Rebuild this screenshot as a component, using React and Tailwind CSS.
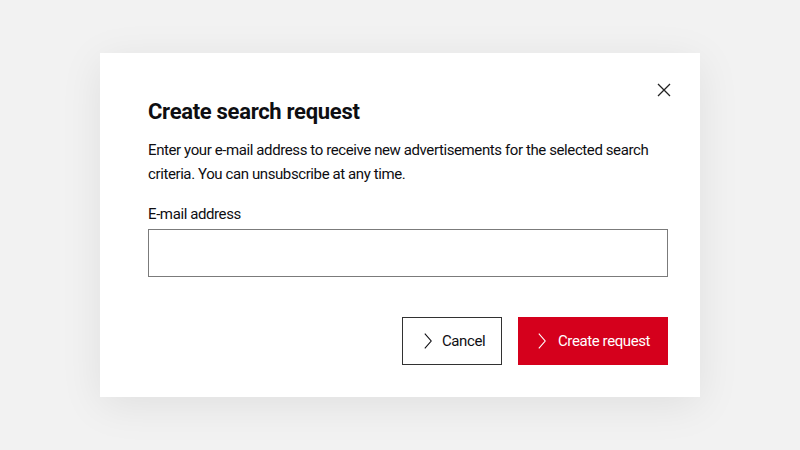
import React from "react";

const Chevron = ({ className }) => (
  <svg className={className} viewBox="0 0 8 16" fill="none" stroke="currentColor" strokeWidth={1.1}>
    <path d="M0.8 0.6l6.4 7.4-6.4 7.4" />
  </svg>
);

const App = () => {
  return (
    <div
      className="w-[800px] h-[450px] bg-[#f2f2f2] flex items-start justify-center pt-[53px]"
      style={{ fontFamily: 'Roboto, "Liberation Sans", sans-serif' }}
    >
      <div className="relative w-[600px] bg-white pl-12 pr-8 pt-[43px] pb-8 shadow-[0_8px_40px_rgba(0,0,0,0.08)]">
        {/* Close */}
        <button className="absolute right-[29px] top-[30px] w-[14px] h-[14px] text-[#222]">
          <svg viewBox="0 0 14 14" className="w-full h-full" fill="none" stroke="currentColor" strokeWidth={1.3}>
            <path d="M1 1l12 12M13 1L1 13" />
          </svg>
        </button>

        <h2 className="text-[22px] leading-[32px] font-bold text-[#0e0e12] tracking-[-0.3px]">
          Create search request
        </h2>
        <p className="mt-[10px] text-[15px] leading-[24px] text-[#0e0e12] tracking-[-0.4px]">
          Enter your e-mail address to receive new advertisements for the selected search criteria. You can unsubscribe at any time.
        </p>

        <label className="block mt-[16px] text-[15px] leading-[24px] text-[#0e0e12] tracking-[-0.4px]">
          E-mail address
        </label>
        <input
          type="email"
          className="block w-full h-[48px] mt-[3px] border border-[#7b7b7b] outline-none px-3"
        />

        <div className="flex justify-end gap-4 mt-[40px]">
          <button className="h-[48px] w-[100px] border border-[#323232] flex items-center pl-[21px] gap-[10px] text-[15px] tracking-[-0.4px] text-[#0e0e12]">
            <Chevron className="w-[8px] h-[16px]" />
            <span>Cancel</span>
          </button>
          <button className="h-[48px] w-[150px] bg-[#d5001c] flex items-center pl-[20px] gap-[12px] text-[15px] tracking-[-0.4px] text-white">
            <Chevron className="w-[8px] h-[16px]" />
            <span>Create request</span>
          </button>
        </div>
      </div>
    </div>
  );
};

export default App;
